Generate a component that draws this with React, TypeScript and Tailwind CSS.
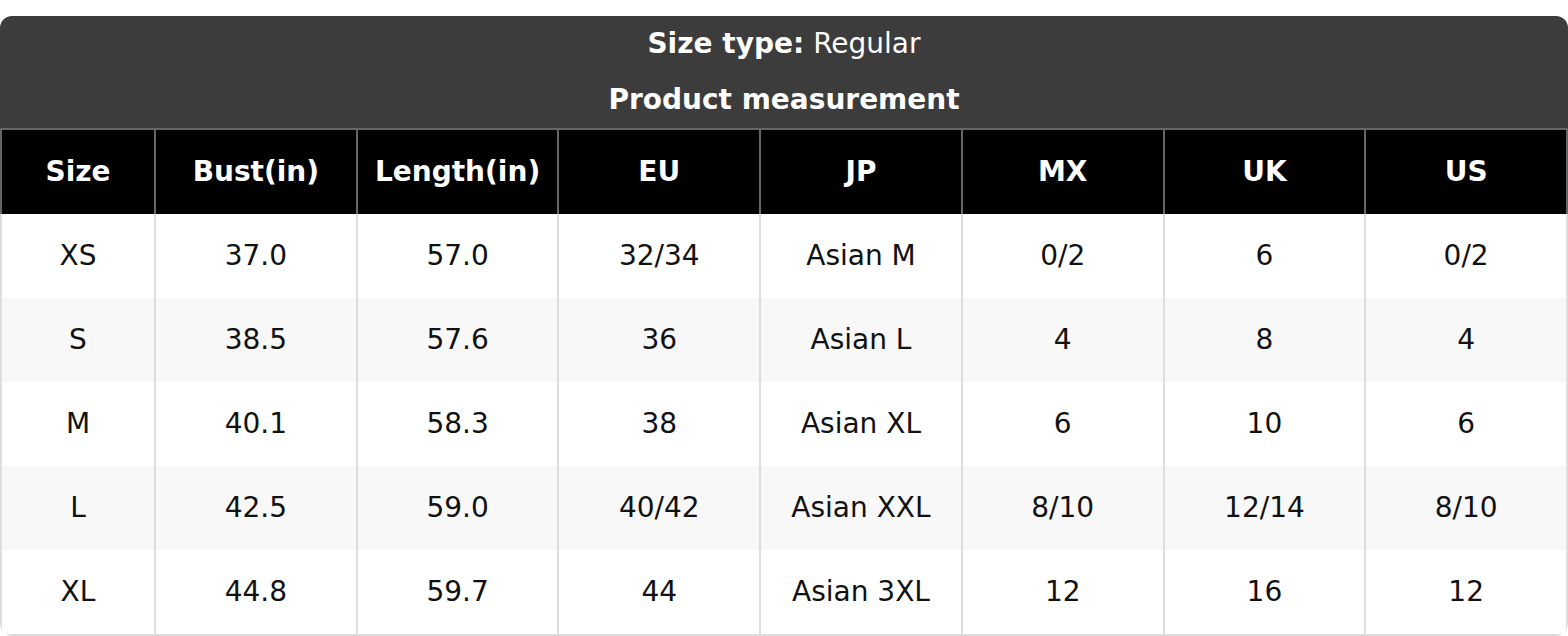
import React from "react";

const headers = ["Size", "Bust(in)", "Length(in)", "EU", "JP", "MX", "UK", "US"];
const rows = [
  ["XS", "37.0", "57.0", "32/34", "Asian M", "0/2", "6", "0/2"],
  ["S", "38.5", "57.6", "36", "Asian L", "4", "8", "4"],
  ["M", "40.1", "58.3", "38", "Asian XL", "6", "10", "6"],
  ["L", "42.5", "59.0", "40/42", "Asian XXL", "8/10", "12/14", "8/10"],
  ["XL", "44.8", "59.7", "44", "Asian 3XL", "12", "16", "12"],
];

export default function App() {
  return (
    <div className="bg-white pt-4" style={{ fontFamily: '"DejaVu Sans", sans-serif' }}>
      <div className="w-full rounded-t-[12px] rounded-b-[12px] overflow-hidden">
        <div className="bg-[#3c3c3c] text-white text-[28px] flex flex-col">
          <div className="h-[56px] flex items-center justify-center">
            <span className="font-bold">Size type:</span>
            <span className="ml-[9px]">Regular</span>
          </div>
          <div className="h-[56px] flex items-center justify-center font-bold">Product measurement</div>
        </div>
        <div className="grid grid-cols-[152px_repeat(7,minmax(0,1fr))] bg-black text-white font-bold text-[28px] border-t-2 border-x-2 border-[#666]">
          {headers.map((h, i) => (
            <div
              key={h}
              className={`h-[84px] flex items-center justify-center ${i > 0 ? "border-l-2 border-[#666]" : ""}`}
            >
              {h}
            </div>
          ))}
        </div>
        <div className="border-x-2 border-b-2 border-[#dddddd] rounded-b-[12px] text-[28px] text-[#111]">
          {rows.map((r, ri) => (
            <div
              key={ri}
              className={`grid grid-cols-[152px_repeat(7,minmax(0,1fr))] ${ri % 2 === 1 ? "bg-[#f8f8f8]" : "bg-white"}`}
            >
              {r.map((c, ci) => (
                <div
                  key={ci}
                  className={`h-[84px] flex items-center justify-center ${ci > 0 ? "border-l-2 border-[#dddddd]" : ""}`}
                >
                  {c}
                </div>
              ))}
            </div>
          ))}
        </div>
      </div>
    </div>
  );
}
